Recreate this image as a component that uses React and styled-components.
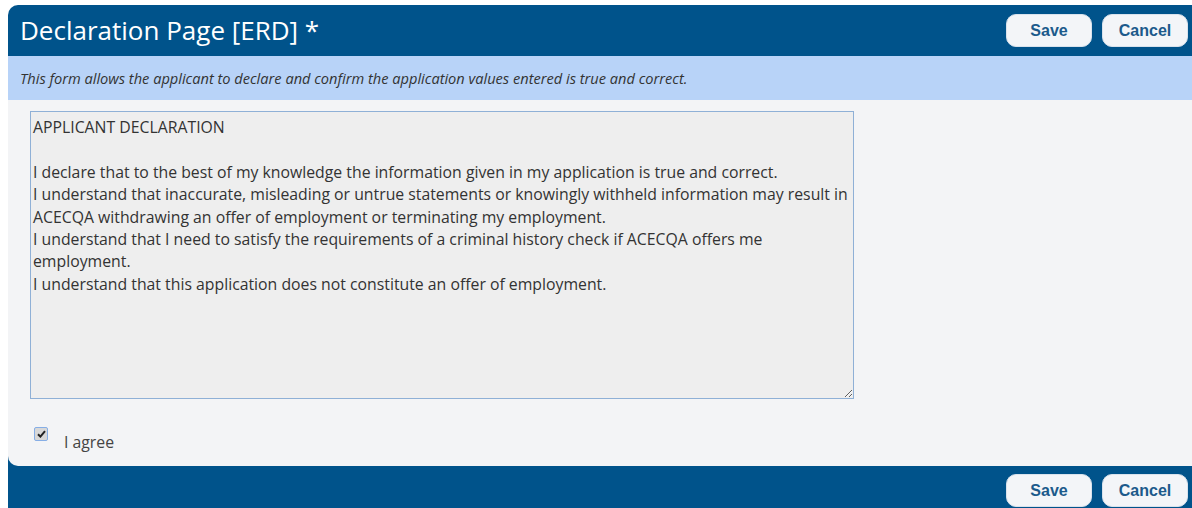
import styled, { createGlobalStyle } from "styled-components";

const declarationText = `APPLICANT DECLARATION

I declare that to the best of my knowledge the information given in my application is true and correct.
I understand that inaccurate, misleading or untrue statements or knowingly withheld information may result in
ACECQA withdrawing an offer of employment or terminating my employment.
I understand that I need to satisfy the requirements of a criminal history check if ACECQA offers me
employment.
I understand that this application does not constitute an offer of employment.`;

const GlobalStyle = createGlobalStyle`
  html, body {
    margin: 0;
    background: #ffffff;
  }
  body {
    padding: 5px 0 0 8px;
    font-family: "Open Sans", "Noto Sans", sans-serif;
    overflow: hidden;
  }
`;

function ActionButtons() {
  return (
    <ButtonGroup>
      <ActionButton type="button">Save</ActionButton>
      <ActionButton type="button">Cancel</ActionButton>
    </ButtonGroup>
  );
}

function App() {
  return (
    <>
      <GlobalStyle />
      <Frame>
        <Header>
          <Title>Declaration Page [ERD] *</Title>
          <ActionButtons />
        </Header>
        <InfoBar>
          This form allows the applicant to declare and confirm the application
          values entered is true and correct.
        </InfoBar>
        <Body>
          <Declaration
            readOnly
            wrap="off"
            defaultValue={declarationText}
          />
          <AgreeRow>
            <CheckBox>
              <svg width="9" height="8" viewBox="0 0 9 8">
                <path
                  d="M1 4.2 L3.4 6.6 L8 1.2"
                  fill="none"
                  stroke="#222"
                  strokeWidth="2"
                />
              </svg>
            </CheckBox>
            <AgreeLabel>I agree</AgreeLabel>
          </AgreeRow>
        </Body>
        <Footer>
          <ActionButtons />
        </Footer>
      </Frame>
    </>
  );
}

export default App;

const Frame = styled.div`
  width: 1184px;
  background-color: #00538b;
  border-radius: 10px 0 0 10px;
  display: flex;
  flex-direction: column;
`;

const Header = styled.div`
  height: 51px;
  display: flex;
  align-items: center;
  justify-content: space-between;
  padding: 0 4px 0 12px;
`;

const Title = styled.h1`
  margin: 0 0 2px;
  color: #ffffff;
  font-size: 26px;
  font-weight: 400;
  letter-spacing: 0;
`;

const ButtonGroup = styled.div`
  display: flex;
  gap: 10px;
`;

const ActionButton = styled.button`
  width: 86px;
  height: 33px;
  border: 1px solid #d9e2ec;
  border-radius: 10px;
  background-color: #f3f5f8;
  color: #1c5a8b;
  font-family: "Liberation Sans", Arial, sans-serif;
  font-weight: 700;
  font-size: 16px;
  padding: 0;
  cursor: pointer;
`;

const InfoBar = styled.div`
  height: 44px;
  display: flex;
  align-items: center;
  padding: 0 12px;
  background-color: #b8d3f8;
  color: #333333;
  font-size: 14.6px;
  font-style: italic;
`;

const Body = styled.div`
  background-color: #f3f4f6;
  border-bottom-left-radius: 10px;
  padding: 11px 0 14px 22px;
  display: flex;
  flex-direction: column;
`;

const Declaration = styled.textarea`
  width: 824px;
  height: 288px;
  box-sizing: border-box;
  margin: 0;
  padding: 4px 2px;
  border: 1px solid #8fb0d6;
  background-color: #eeeeee;
  color: #333333;
  font-family: "Open Sans", "Noto Sans", sans-serif;
  font-size: 15.8px;
  line-height: 22.4px;
  white-space: pre;
  overflow: hidden;
  resize: both;
  outline: none;
`;

const AgreeRow = styled.div`
  display: flex;
  align-items: flex-start;
  gap: 16px;
  margin-top: 28px;
  padding-left: 4px;
`;

const CheckBox = styled.span`
  width: 14px;
  height: 14px;
  box-sizing: border-box;
  border: 1px solid #86aee6;
  border-radius: 2px;
  background-color: #d8d8d8;
  display: flex;
  align-items: center;
  justify-content: center;
`;

const AgreeLabel = styled.span`
  color: #444444;
  font-size: 15.8px;
  line-height: 20px;
  margin-top: 5px;
`;

const Footer = styled.div`
  height: 48px;
  display: flex;
  align-items: flex-start;
  justify-content: flex-end;
  padding: 8px 4px 0;
`;
